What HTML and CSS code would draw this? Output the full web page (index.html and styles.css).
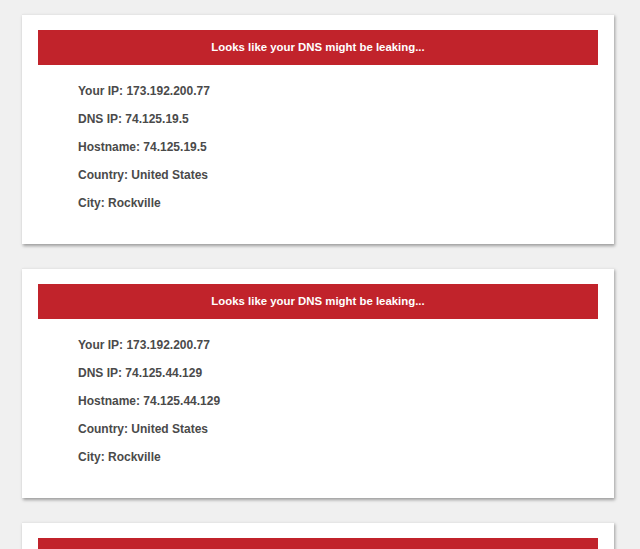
FILE: index.html
```html
<!DOCTYPE html>
<html lang="en">
<head>
    <meta charset="UTF-8">
    <meta name="viewport" content="width=device-width, initial-scale=1.0">
    <title>DNS Leak Test</title>
    <link rel="stylesheet" href="styles.css">
</head>
<body>
    <div class="container">
        <div class="card">
            <div class="banner">Looks like your DNS might be leaking...</div>
            <div class="info">
                <p>Your IP: 173.192.200.77</p>
                <p>DNS IP: 74.125.19.5</p>
                <p>Hostname: 74.125.19.5</p>
                <p>Country: United States</p>
                <p>City: Rockville</p>
            </div>
        </div>

        <div class="card">
            <div class="banner">Looks like your DNS might be leaking...</div>
            <div class="info">
                <p>Your IP: 173.192.200.77</p>
                <p>DNS IP: 74.125.44.129</p>
                <p>Hostname: 74.125.44.129</p>
                <p>Country: United States</p>
                <p>City: Rockville</p>
            </div>
        </div>

        <div class="card">
            <div class="banner">Looks like your DNS might be leaking...</div>
            <div class="info">
                <p>Your IP: 173.192.200.77</p>
                <p>DNS IP: 74.125.44.130</p>
                <p>Hostname: 74.125.44.130</p>
                <p>Country: United States</p>
                <p>City: Rockville</p>
            </div>
        </div>
    </div>
</body>
</html>
```

FILE: styles.css
```css
* {
    margin: 0;
    padding: 0;
    box-sizing: border-box;
}
body {
    background-color: #f0f0f0;
    font-family: "Liberation Sans", Arial, Helvetica, sans-serif;
    overflow: hidden;
}
.container {
    display: flex;
    flex-direction: column;
    gap: 24px;
    width: 592px;
    margin-left: 22px;
    padding-top: 14px;
}
.card {
    background-color: #fff;
    padding: 15px 16px 27px 16px;
    box-shadow: 1px 2px 3px rgba(0, 0, 0, 0.35);
    border-top: 1px solid #e6e6e6;
}
.banner {
    background-color: #c1232b;
    color: #fff;
    font-weight: bold;
    font-size: 11.4px;
    height: 35px;
    line-height: 35px;
    text-align: center;
}
.info {
    margin-top: 12px;
    padding-left: 40px;
}
.info p {
    color: #4a4a4a;
    font-weight: bold;
    font-size: 12px;
    line-height: 28px;
}
```
